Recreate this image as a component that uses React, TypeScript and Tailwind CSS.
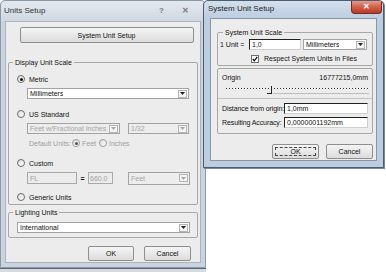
import React from 'react';

const font = { fontFamily: '"Liberation Sans", Arial, sans-serif' };

function Radio({ on, dim }: { on?: boolean; dim?: boolean }) {
  return (
    <span
      className={`w-[8px] h-[8px] rounded-full border ${dim ? 'border-[#9a9a9a]' : 'border-[#6a6a6a]'} bg-gradient-to-br from-[#dcdcdc] to-white flex items-center justify-center shrink-0`}
    >
      {on && <span className={`w-[3px] h-[3px] rounded-full ${dim ? 'bg-[#555]' : 'bg-[#111]'}`} />}
    </span>
  );
}

function Arrow({ disabled }: { disabled?: boolean }) {
  return (
    <span className="w-[9px] h-[8px] border border-[#b5b5b5] bg-[#f4f4f4] flex items-center justify-center shrink-0">
      <svg width="5" height="3" viewBox="0 0 5 3">
        <path d="M0 0h5L2.5 3z" fill={disabled ? '#a8a8a8' : '#222'} />
      </svg>
    </span>
  );
}

function Select({ text, w, h = 'h-[11px]', disabled }: { text: string; w: string; h?: string; disabled?: boolean }) {
  return (
    <div
      className={`${w} ${h} border border-[#a3a3a3] flex items-center justify-between pl-[2px] pr-[1px] ${
        disabled ? 'bg-[#ededed] text-[#a3a3a3]' : 'bg-white text-[#111]'
      }`}
    >
      <span className="truncate leading-none">{text}</span>
      <Arrow disabled={disabled} />
    </div>
  );
}

function Button({ label, w, h = 'h-[15px]', focus }: { label: string; w: string; h?: string; focus?: boolean }) {
  return (
    <div
      className={`${w} ${h} border border-[#8f8f8f] rounded-[2px] bg-gradient-to-b from-[#f5f5f5] to-[#dcdcdc] flex items-center justify-center text-[#111] p-[2px]`}
    >
      {focus ? (
        <span className="w-full h-full border border-dashed border-[#444] flex items-center justify-center leading-none">{label}</span>
      ) : (
        <span className="leading-none">{label}</span>
      )}
    </div>
  );
}

function SunkenInput({ text, w }: { text: string; w: string }) {
  return (
    <div className={`${w} h-[11px] bg-white border-t border-l border-t-[#222] border-l-[#222] border-b border-r border-b-[#cfcfcf] border-r-[#cfcfcf] flex items-center pl-[2px] leading-none text-[#111]`}>
      {text}
    </div>
  );
}

function UnitsSetup() {
  return (
    <div className="absolute left-0 top-0 w-[206px] h-[268px] bg-[#cad4de] border border-[#8a98a7] rounded-t-[5px] flex flex-col">
      <div className="h-[20px] shrink-0 flex items-center justify-between pl-[3px] pr-[16px] bg-gradient-to-b from-[#e3e8ee] to-[#cfd8e1] rounded-t-[5px]">
        <span className="text-[8px] text-[#333]">Units Setup</span>
        <div className="flex items-center gap-[18px] text-[#7a7a7a] text-[8px] font-bold">
          <span>?</span>
          <span>✕</span>
        </div>
      </div>
      <div className="flex-1 mx-[4px] mb-[4px] bg-[#ececec] border border-[#a9b4bf] flex flex-col pl-[2px] pr-[2px] text-[7px] text-[#111]">
        <div className="flex justify-center mt-[5px] pl-[7px]">
          <Button label="System Unit Setup" w="w-[174px]" h="h-[16px]" />
        </div>

        <fieldset className="mt-[16px] h-[146px] border border-[#a7a7a7] rounded-[2px] pl-[8px] pr-[4px]">
          <legend className="-ml-[4px] px-[2px] leading-none">Display Unit Scale</legend>
          <div className="h-[10px] flex items-center gap-[4px] mt-[8px]">
            <Radio on />
            <span className="leading-none">Metric</span>
          </div>
          <div className="pl-[10px] mt-[4px]">
            <Select text="Millimeters" w="w-[162px]" />
          </div>
          <div className="h-[10px] flex items-center gap-[4px] mt-[10px]">
            <Radio />
            <span className="leading-none">US Standard</span>
          </div>
          <div className="pl-[10px] mt-[4px] flex gap-[8px]">
            <Select text="Feet w/Fractional Inches" w="w-[93px]" disabled />
            <Select text="1/32" w="w-[61px]" disabled />
          </div>
          <div className="h-[10px] pl-[12px] mt-[4px] flex items-center text-[#a0a0a0]">
            <span className="leading-none w-[43px]">Default Units:</span>
            <Radio on dim />
            <span className="leading-none ml-[2px] w-[17px]">Feet</span>
            <Radio dim />
            <span className="leading-none ml-[2px]">Inches</span>
          </div>
          <div className="h-[10px] flex items-center gap-[4px] mt-[10px]">
            <Radio />
            <span className="leading-none">Custom</span>
          </div>
          <div className="pl-[10px] mt-[4px] flex items-center h-[12px]">
            <div className="w-[50px] h-[12px] bg-[#ececec] border border-[#a9a9a9] text-[#a0a0a0] pl-[2px] flex items-center leading-none">FL</div>
            <span className="w-[11px] text-center font-bold leading-none">=</span>
            <div className="w-[25px] h-[12px] bg-[#ececec] border border-[#a9a9a9] text-[#a0a0a0] pl-[1px] flex items-center leading-none">660.0</div>
            <div className="ml-[15px]">
              <Select text="Feet" w="w-[62px]" h="h-[13px]" disabled />
            </div>
          </div>
          <div className="h-[10px] flex items-center gap-[4px] mt-[8px]">
            <Radio />
            <span className="leading-none">Generic Units</span>
          </div>
        </fieldset>

        <fieldset className="mt-[4px] h-[29px] border border-[#a7a7a7] rounded-[2px] pl-[8px] pr-[4px]">
          <legend className="-ml-[4px] px-[2px] leading-none">Lighting Units</legend>
          <div className="mt-[6px]">
            <Select text="International" w="w-[173px]" />
          </div>
        </fieldset>

        <div className="flex justify-end gap-[10px] mt-[8px] pr-[7px]">
          <Button label="OK" w="w-[46px]" />
          <Button label="Cancel" w="w-[47px]" />
        </div>
      </div>
    </div>
  );
}

function Slider() {
  const dots = Array.from({ length: 48 }, (_, i) => i * 3);
  return (
    <svg width="144" height="10" viewBox="0 0 144 10" className="mt-[4px] ml-[2px] block">
      {dots.map((x) => (
        <rect key={x} x={x + 1} y={3} width={1} height={1} fill="#333" />
      ))}
      <line x1="46.5" y1="1" x2="46.5" y2="8" stroke="#222" strokeWidth="1" />
      <line x1="42" y1="8.5" x2="47" y2="8.5" stroke="#222" strokeWidth="1" />
      <line x1="48" y1="8.5" x2="144" y2="8.5" stroke="#bdbdbd" strokeWidth="1" />
    </svg>
  );
}

function SystemUnitSetup() {
  return (
    <div className="absolute left-[203px] top-0 w-[181px] h-[168px] bg-[#bdcde0] border border-[#4e5d6d] rounded-t-[5px] flex flex-col shadow-[1px_1px_0_#7b8896]">
      <div className="h-[17px] shrink-0 flex items-start justify-between pl-[4px] pr-[1px] rounded-t-[5px] bg-gradient-to-b from-[#d3dfec] to-[#bdcde0]">
        <span className="text-[8px] text-[#222] mt-[4px] leading-none">System Unit Setup</span>
        <span className="w-[31px] h-[13px] bg-gradient-to-b from-[#e6988a] via-[#d0604b] to-[#b93a26] border border-[#7b2a1e] border-t-0 rounded-b-[4px] flex items-center justify-center text-white text-[8px] font-bold leading-none">
          ✕
        </span>
      </div>
      <div className="flex-1 mx-[6px] mb-[6px] bg-[#ececec] border border-[#8796a6] flex flex-col pl-[6px] pr-[3px] text-[7px] text-[#111]">
        <fieldset className="mt-[10px] h-[37px] border border-[#a7a7a7] rounded-[2px] pl-[2px] pr-[4px]">
          <legend className="ml-[3px] px-[2px] leading-none">System Unit Scale</legend>
          <div className="flex items-center mt-[3px] h-[11px]">
            <span className="w-[29px] leading-none">1 Unit =</span>
            <SunkenInput text="1,0" w="w-[52px]" />
            <div className="ml-[2px]">
              <Select text="Millimeters" w="w-[64px]" />
            </div>
          </div>
          <div className="flex items-center gap-[5px] pl-[31px] mt-[4px] h-[9px]">
            <span className="w-[8px] h-[8px] border border-[#6f6f6f] bg-white flex items-center justify-center shrink-0">
              <svg width="6" height="6" viewBox="0 0 6 6">
                <path d="M0.8 3l1.5 1.8L5.3 0.8" stroke="#111" strokeWidth="1.3" fill="none" />
              </svg>
            </span>
            <span className="leading-none">Respect System Units in Files</span>
          </div>
        </fieldset>

        <div className="mt-[2px] h-[66px] border border-[#a7a7a7] rounded-[2px] flex flex-col text-[#111]">
          <div className="flex justify-between items-center mt-[4px] h-[8px] pl-[4px] pr-[4px] leading-none">
            <span className="text-[#111]">Origin</span>
            <span>16777215,0mm</span>
          </div>
          <div className="pl-[5px]">
            <Slider />
          </div>
          <div className="border-t border-[#c2c2c2] mt-[3px]" />
          <div className="flex items-center mt-[4px] pl-[4px] h-[11px]">
            <span className="w-[62px] leading-none whitespace-nowrap tracking-[-0.1px]">Distance from origin:</span>
            <SunkenInput text="1,0mm" w="w-[84px]" />
          </div>
          <div className="flex items-center mt-[3px] pl-[4px] h-[11px]">
            <span className="w-[62px] leading-none whitespace-nowrap tracking-[-0.1px]">Resulting Accuracy:</span>
            <SunkenInput text="0,0000001192mm" w="w-[84px]" />
          </div>
        </div>

        <div className="flex justify-end gap-[7px] mt-[10px]">
          <Button label="OK" w="w-[47px]" focus />
          <Button label="Cancel" w="w-[47px]" />
        </div>
      </div>
    </div>
  );
}

export default function App() {
  return (
    <div className="relative w-[386px] h-[272px] bg-white overflow-hidden" style={font}>
      <UnitsSetup />
      <div className="absolute left-0 top-[268px] w-[206px] h-[4px] bg-[#d7dbe0] border-t border-[#5b6774]" />
      <SystemUnitSetup />
    </div>
  );
}
